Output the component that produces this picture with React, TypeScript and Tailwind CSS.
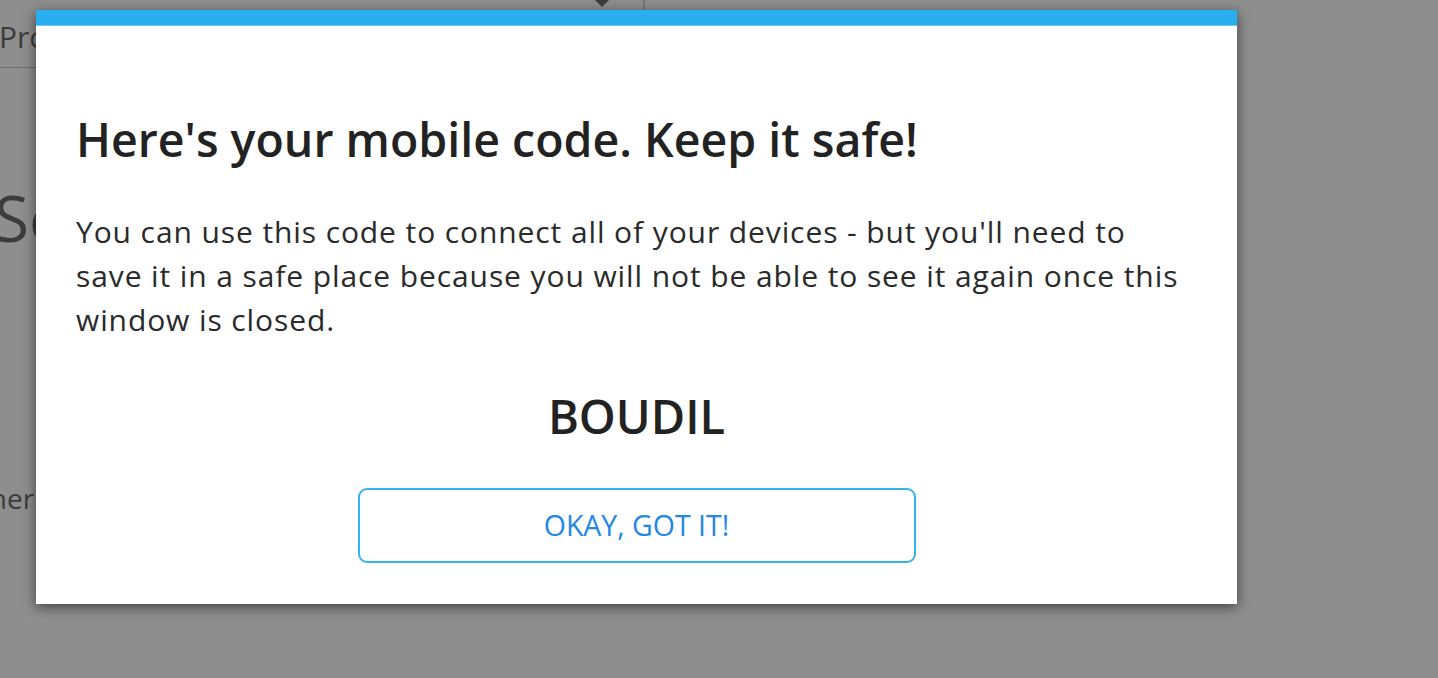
import React from 'react';

const font = { fontFamily: '"Open Sans", "Liberation Sans", sans-serif' };

function BackgroundPage() {
    return (
        <div className="flex flex-col w-full h-full bg-[#8e8e8e] text-[#3c3c3c]">
            {/* top strip */}
            <div className="flex w-[1180px] h-[68px] border-b border-[#6f6f6f]">
                <div className="w-[300px] pt-[17px] text-[30px] leading-[40px] -ml-[1px]">Profile</div>
                <div className="ml-[296px] w-0 h-0 border-l-[7px] border-r-[7px] border-t-[7px] border-l-transparent border-r-transparent border-t-[#3c3c3c]" />
                <div className="ml-[34px] w-[2px] h-[10px] bg-[#777777]" />
            </div>
            {/* page title */}
            <div className="mt-[110px] -ml-[6px] text-[64px] leading-[80px]">Settings</div>
            {/* text row */}
            <div className="mt-[220px] -ml-[42px] text-[28px] leading-[40px]">Other</div>
        </div>
    );
}

export default function App() {
    return (
        <div className="relative w-[1438px] h-[678px] overflow-hidden" style={font}>
            <BackgroundPage />
            <div className="absolute left-[36px] top-[10px] w-[1201px] bg-white shadow-[0_3px_12px_rgba(0,0,0,0.55)]">
                <div className="h-[16px] bg-[#29aef0] border-b border-[#6fcaf5]" />
                <div className="flex flex-col px-[40px] pt-[86px] pb-[41px]">
                    <h1 className="text-[46.5px] leading-[55px] font-semibold text-[#222222]">
                        Here's your mobile code. Keep it safe!
                    </h1>
                    <p className="mt-[43px] max-w-[1106px] text-[30px] leading-[44px] tracking-[0.9px] text-[#2a2a2a]">
                        You can use this code to connect all of your devices - but you'll need to save it in a safe place because you will not be able to see it again once this window is closed.
                    </p>
                    <div className="mt-[47px] text-center text-[47px] leading-[55px] font-semibold text-[#222222]">
                        BOUDIL
                    </div>
                    <div className="mt-[44px] flex justify-center">
                        <button className="w-[558px] h-[75px] border-2 border-[#35b3f0] rounded-[9px] text-[28.5px] text-[#2288e6] bg-white">
                            OKAY, GOT IT!
                        </button>
                    </div>
                </div>
            </div>
        </div>
    );
}
